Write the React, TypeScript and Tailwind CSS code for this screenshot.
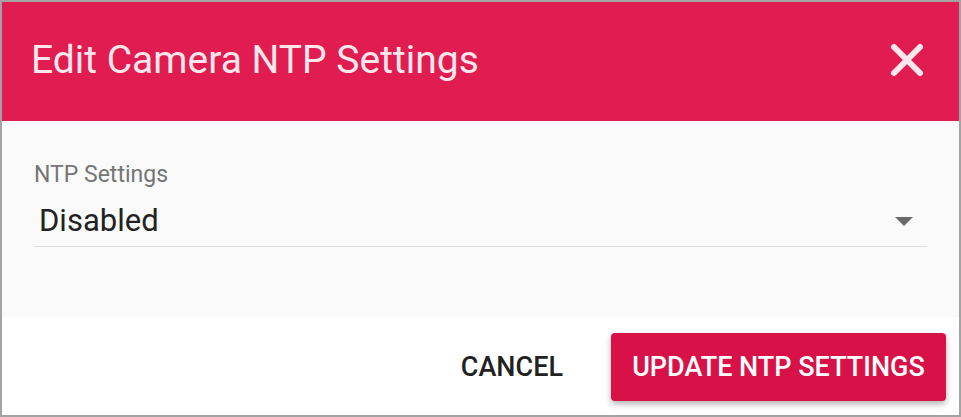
import React from 'react';

const App: React.FC = () => {
  return (
    <div className="w-[961px] h-[417px] border-2 border-[#a3a3a3] bg-white flex flex-col" style={{ fontFamily: 'Roboto, "Liberation Sans", sans-serif' }}>
      {/* Header */}
      <div className="h-[119px] shrink-0 bg-[#e01c50] flex items-center justify-between pl-[29px] pr-[34px]">
        <h2 className="text-[39px] font-normal text-[#fde6ec] leading-none -mt-[2px]">Edit Camera NTP Settings</h2>
        <button aria-label="Close" className="w-[36px] h-[36px] flex items-center justify-center -mt-[3px]">
          <svg viewBox="0 0 36 36" className="w-[36px] h-[36px]">
            <path d="M5 5 L31 31 M31 5 L5 31" stroke="#fde6ec" strokeWidth="6" strokeLinecap="round" />
          </svg>
        </button>
      </div>

      {/* Body */}
      <div className="h-[196px] shrink-0 bg-[#fafafa] px-[32px] pt-[41px]">
        <label className="block text-[23px] text-[#757575] leading-[26px]">NTP Settings</label>
        <div className="mt-[15px] flex items-center justify-between border-b border-[#dedede] pb-[7px]">
          <span className="pl-[5px] text-[31px] text-[#222222] leading-[36px]">Disabled</span>
          <svg viewBox="0 0 18 9" className="w-[18px] h-[9px] mr-[14px]">
            <path d="M0 0 L18 0 L9 9 Z" fill="#6b6b6b" />
          </svg>
        </div>
      </div>

      {/* Footer */}
      <div className="flex-1 flex items-center justify-end pr-[13px] gap-[24px] pt-[2px]">
        <button className="px-[24px] h-[68px] text-[27px] font-medium text-[#222222]">CANCEL</button>
        <button className="w-[335px] h-[68px] bg-[#d81248] rounded-[4px] text-[27px] font-medium text-white shadow-[0_3px_6px_rgba(0,0,0,0.3)]">
          UPDATE NTP SETTINGS
        </button>
      </div>
    </div>
  );
};

export default App;
